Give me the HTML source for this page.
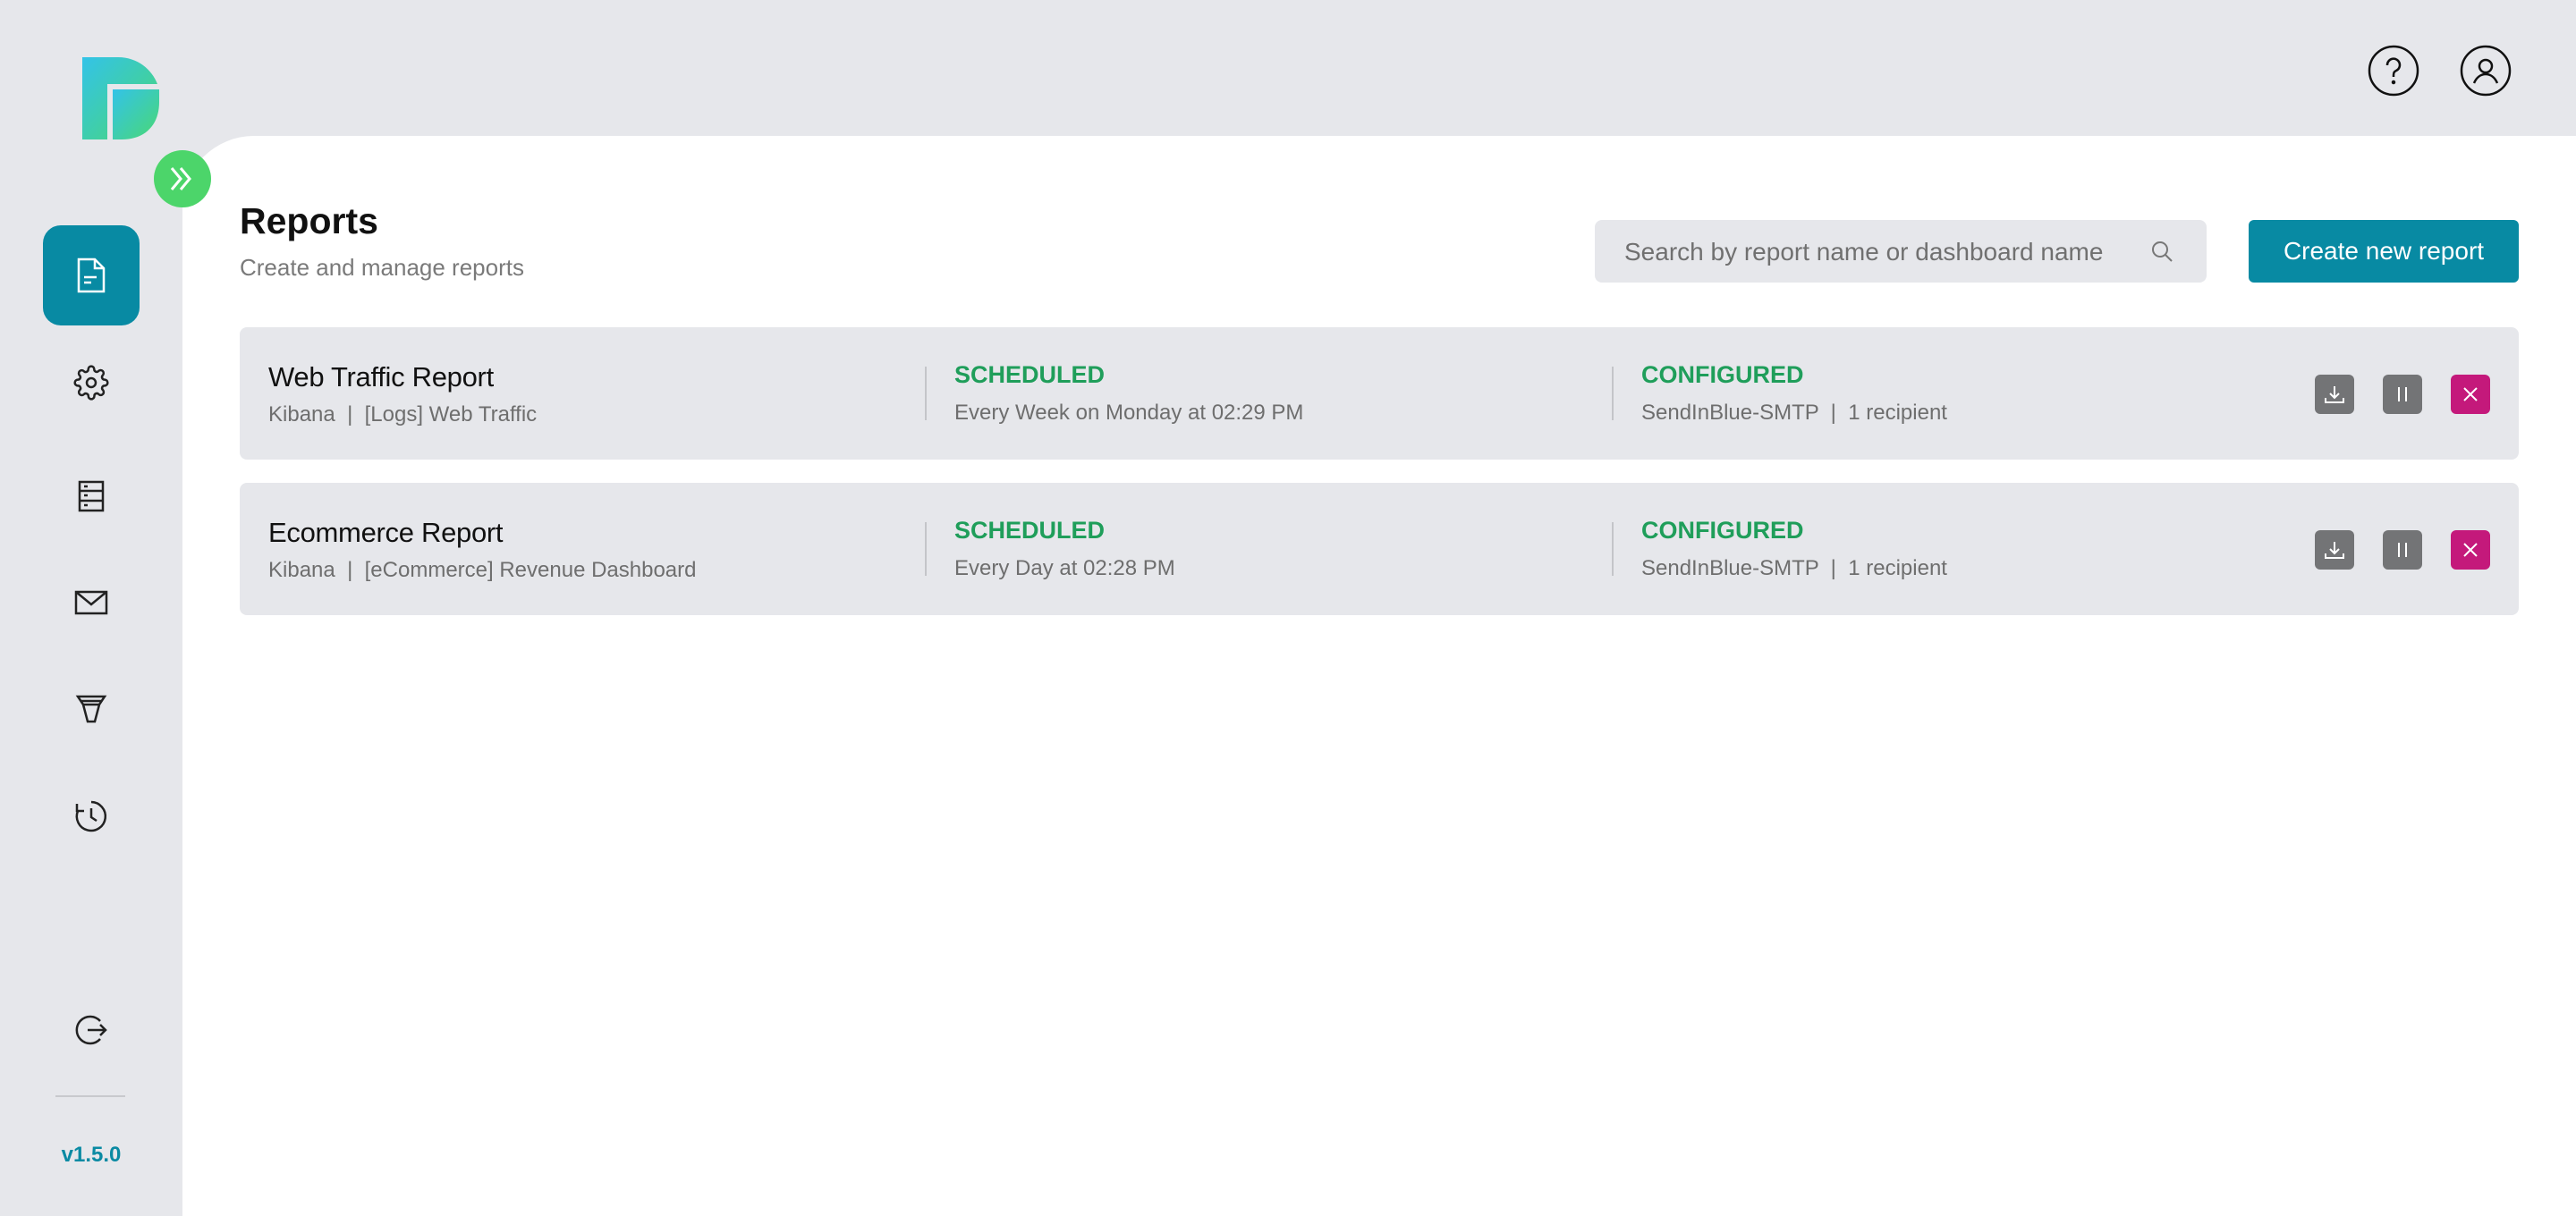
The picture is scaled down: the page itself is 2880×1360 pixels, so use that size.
<!DOCTYPE html>
<html><head><style>
*{margin:0;padding:0;box-sizing:border-box}
body{width:2880px;height:1360px;background:#e6e7eb;font-family:"Liberation Sans",sans-serif;position:relative;overflow:hidden}
.abs{position:absolute}
.panel{left:204px;top:152px;width:2676px;height:1208px;background:#fff;border-top-left-radius:80px}
.row{left:268px;width:2548px;height:148px;background:#e6e7eb;border-radius:8px}
.t{position:absolute;left:32px;top:38px;font-size:31px;color:#111;letter-spacing:-0.3px}
.s{position:absolute;left:32px;top:84px;font-size:24px;color:#6e6e6e}
.g{position:absolute;font-size:27px;color:#1f9e5a;font-weight:bold;top:38px}
.s2{position:absolute;font-size:24px;color:#6e6e6e;top:82px}
.dv{position:absolute;width:2px;height:60px;background:#c4c5c9;top:44px}
.btn{position:absolute;width:44px;height:44px;border-radius:6px;top:53px;background:#737476}
.ic{position:absolute;left:82px}
</style></head><body>
<div class="abs panel"></div>
<!-- logo -->
<svg class="abs" style="left:92px;top:64px" width="86" height="92" viewBox="0 0 86 92">
<defs><linearGradient id="lg" x1="0" y1="0" x2="1" y2="1"><stop offset="0" stop-color="#33c3e8"/><stop offset="1" stop-color="#4ad873"/></linearGradient></defs>
<path d="M0 0H40C62 0 78 14 84 30H28V92H0Z" fill="url(#lg)"/>
<path d="M34 36H86V50C86 76 70 92 44 92H34Z" fill="url(#lg)"/>
</svg>
<div class="abs" style="left:172px;top:168px;width:64px;height:64px;border-radius:50%;background:#4cd56a"></div>
<svg class="abs" style="left:172px;top:168px" width="64" height="64" viewBox="0 0 64 64"><path d="M20 20L30 32L20 44M30 20L40 32L30 44" stroke="#fff" stroke-width="3" fill="none"/></svg>
<!-- nav -->
<div class="abs" style="left:48px;top:252px;width:108px;height:112px;border-radius:20px;background:#088aa3"></div>
<svg class="abs" style="left:84px;top:288px" width="36" height="40" viewBox="0 0 36 40"><path d="M4 2H22L32 12V38H4Z M22 2V12H32 M10 22H24 M10 28H18" stroke="#fff" stroke-width="2.5" fill="none"/></svg>
<svg class="abs" style="left:82px;top:408px" width="40" height="40" viewBox="0 0 24 24" fill="none" stroke="#222" stroke-width="1.5"><circle cx="12" cy="12" r="3"/><path d="M19.4 15a1.65 1.65 0 0 0 .33 1.82l.06.06a2 2 0 1 1-2.83 2.83l-.06-.06a1.65 1.65 0 0 0-1.82-.33 1.65 1.65 0 0 0-1 1.51V21a2 2 0 1 1-4 0v-.09A1.65 1.65 0 0 0 9 19.4a1.65 1.65 0 0 0-1.82.33l-.06.06a2 2 0 1 1-2.83-2.83l.06-.06A1.65 1.65 0 0 0 4.68 15a1.65 1.65 0 0 0-1.51-1H3a2 2 0 1 1 0-4h.09A1.65 1.65 0 0 0 4.6 9a1.65 1.65 0 0 0-.33-1.82l-.06-.06a2 2 0 1 1 2.83-2.83l.06.06A1.65 1.65 0 0 0 9 4.68a1.65 1.65 0 0 0 1-1.51V3a2 2 0 1 1 4 0v.09a1.65 1.65 0 0 0 1 1.51 1.65 1.65 0 0 0 1.82-.33l.06-.06a2 2 0 1 1 2.83 2.83l-.06.06A1.65 1.65 0 0 0 19.4 9a1.65 1.65 0 0 0 1.51 1H21a2 2 0 1 1 0 4h-.09a1.65 1.65 0 0 0-1.51 1z"/></svg>
<svg class="abs" style="left:84px;top:536px" width="36" height="38" viewBox="0 0 36 38" fill="none" stroke="#222" stroke-width="2.5"><rect x="5" y="3" width="26" height="32"/><path d="M5 13H31M5 24H31M10 8H14M10 18H14M10 29H14"/></svg>
<svg class="abs" style="left:82px;top:658px" width="40" height="32" viewBox="0 0 40 32" fill="none" stroke="#222" stroke-width="2.5"><rect x="3" y="4" width="34" height="24"/><path d="M3 4L20 18L37 4"/></svg>
<svg class="abs" style="left:84px;top:776px" width="36" height="34" viewBox="0 0 36 34" fill="none" stroke="#222" stroke-width="2.5"><path d="M3 3H33L27 12H9Z M9 12L14 31H22L27 12"/><path d="M6 8H30"/></svg>
<svg class="abs" style="left:82px;top:893px" width="40" height="40" viewBox="0 0 40 40" fill="none" stroke="#222" stroke-width="2.5"><path d="M20 4A16 16 0 1 1 5 14"/><path d="M20 11V21L26 25"/><path d="M4 6V14H12"/></svg>
<svg class="abs" style="left:82px;top:1132px" width="40" height="40" viewBox="0 0 40 40" fill="none" stroke="#222" stroke-width="2.5"><path d="M30 10A15 15 0 1 0 30 30"/><path d="M16 20H36M30 14L36 20L30 26"/></svg>
<div class="abs" style="left:62px;top:1225px;width:78px;height:2px;background:#c8c9cd"></div>
<div class="abs" style="left:0;width:204px;top:1278px;text-align:center;font-size:24px;font-weight:bold;color:#0a8aa3">v1.5.0</div>
<!-- top right -->
<svg class="abs" style="left:2646px;top:49px" width="60" height="60" viewBox="0 0 60 60" fill="none" stroke="#111" stroke-width="2.5"><circle cx="30" cy="30" r="27"/><path d="M23 24a7 7 0 1 1 10 6c-2 1-3 2-3 5v2"/><circle cx="30" cy="43" r="1" fill="#111"/></svg>
<svg class="abs" style="left:2749px;top:49px" width="60" height="60" viewBox="0 0 60 60" fill="none" stroke="#111" stroke-width="2.5"><circle cx="30" cy="30" r="27"/><circle cx="30" cy="25" r="7"/><path d="M17 44c3-7 8-10 13-10s10 3 13 10"/></svg>
<!-- header -->
<div class="abs" style="left:268px;top:224px;font-size:41px;font-weight:bold;color:#111">Reports</div>
<div class="abs" style="left:268px;top:284px;font-size:26px;color:#7a7a7a">Create and manage reports</div>
<div class="abs" style="left:1783px;top:246px;width:684px;height:70px;background:#e6e7eb;border-radius:8px"></div>
<div class="abs" style="left:1816px;top:266px;font-size:28px;color:#707070">Search by report name or dashboard name</div>
<svg class="abs" style="left:2404px;top:268px" width="26" height="26" viewBox="0 0 26 26" fill="none" stroke="#777" stroke-width="2"><circle cx="11" cy="11" r="8"/><path d="M17 17L24 24"/></svg>
<div class="abs" style="left:2514px;top:246px;width:302px;height:70px;background:#088aa3;border-radius:6px;color:#fff;font-size:28px;line-height:70px;text-align:center">Create new report</div>
<!-- rows -->
<div class="abs row" style="top:366px">
<div class="t">Web Traffic Report</div>
<div class="s">Kibana &nbsp;|&nbsp; [Logs] Web Traffic</div>
<div class="dv" style="left:766px"></div>
<div class="g" style="left:799px">SCHEDULED</div>
<div class="s2" style="left:799px">Every Week on Monday at 02:29 PM</div>
<div class="dv" style="left:1534px"></div>
<div class="g" style="left:1567px">CONFIGURED</div>
<div class="s2" style="left:1567px">SendInBlue-SMTP &nbsp;|&nbsp; 1 recipient</div>
<div class="btn" style="left:2320px"><svg width="44" height="44" viewBox="0 0 44 44" fill="none" stroke="#fff" stroke-width="2"><path d="M22 13V26M17 21L22 26L27 21M12 26V31H32V26"/></svg></div>
<div class="btn" style="left:2396px"><svg width="44" height="44" viewBox="0 0 44 44" stroke="#fff" stroke-width="2"><path d="M18 14V30M26 14V30"/></svg></div>
<div class="btn" style="left:2472px;background:#c4197b"><svg width="44" height="44" viewBox="0 0 44 44" stroke="#fff" stroke-width="2"><path d="M15 15L29 29M29 15L15 29"/></svg></div>
</div>
<div class="abs row" style="top:540px">
<div class="t">Ecommerce Report</div>
<div class="s">Kibana &nbsp;|&nbsp; [eCommerce] Revenue Dashboard</div>
<div class="dv" style="left:766px"></div>
<div class="g" style="left:799px">SCHEDULED</div>
<div class="s2" style="left:799px">Every Day at 02:28 PM</div>
<div class="dv" style="left:1534px"></div>
<div class="g" style="left:1567px">CONFIGURED</div>
<div class="s2" style="left:1567px">SendInBlue-SMTP &nbsp;|&nbsp; 1 recipient</div>
<div class="btn" style="left:2320px"><svg width="44" height="44" viewBox="0 0 44 44" fill="none" stroke="#fff" stroke-width="2"><path d="M22 13V26M17 21L22 26L27 21M12 26V31H32V26"/></svg></div>
<div class="btn" style="left:2396px"><svg width="44" height="44" viewBox="0 0 44 44" stroke="#fff" stroke-width="2"><path d="M18 14V30M26 14V30"/></svg></div>
<div class="btn" style="left:2472px;background:#c4197b"><svg width="44" height="44" viewBox="0 0 44 44" stroke="#fff" stroke-width="2"><path d="M15 15L29 29M29 15L15 29"/></svg></div>
</div>
</body></html>
